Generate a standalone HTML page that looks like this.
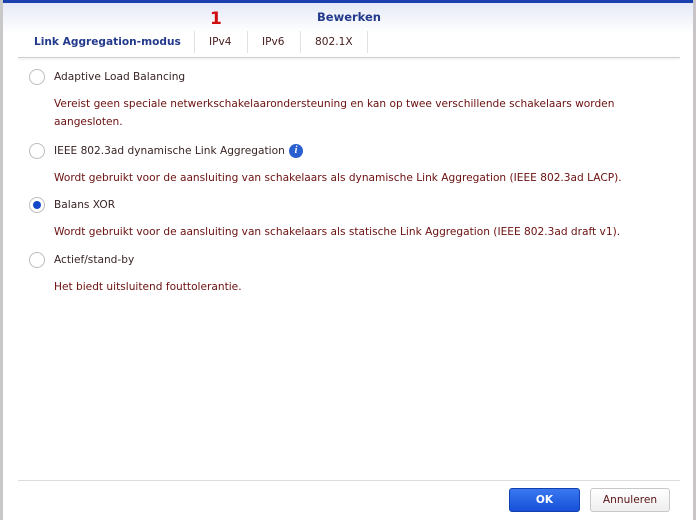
<!DOCTYPE html>
<html><head><meta charset="utf-8"><style>
body{margin:0;width:700px;height:520px;overflow:hidden;background:#fff;font-family:"DejaVu Sans",Verdana,sans-serif;font-size:10.6px;position:relative}
.abs{position:absolute;white-space:nowrap}
.top{position:absolute;left:0;top:0;width:700px;height:3px;background:#1a3fae}
.hdr{position:absolute;left:0;top:3px;width:700px;height:30px;background:linear-gradient(#e4e9f6,#fff)}
.lb{position:absolute;left:0;top:0;width:3px;height:520px;background:#c8c8c8}
.rb{position:absolute;left:693px;top:0;width:3px;height:520px;background:#c8c4c8}
.rb2{position:absolute;left:696px;top:0;width:4px;height:520px;background:#fff}
.title{left:317px;top:10px;color:#233a8c;font-weight:bold;font-size:11.5px}
.one{left:210px;top:9px;color:#d01010;font-weight:bold;font-size:17px}
.tabline{position:absolute;left:18px;top:57px;width:662px;height:1px;background:#cfcfcf;box-shadow:0 1px 2px #ddd}
.tab{top:36px;color:#4a2020}
.sep{position:absolute;top:31px;width:1px;height:22px;background:#e2e2e2}
.radio{position:absolute;left:29px;width:14px;height:14px;border:1px solid #bdbdbd;border-radius:50%;background:#fff}
.radio.on::after{content:"";position:absolute;left:3px;top:3px;width:8px;height:8px;border-radius:50%;background:#1248c8}
.lbl{left:54px;color:#3a2525}
.desc{left:54px;color:#6b1010}
.btm{position:absolute;left:18px;top:480px;width:662px;height:1px;background:#ddd}
.ok{position:absolute;left:509px;top:488px;width:71px;height:24px;background:linear-gradient(#3a78f0,#1550d8);border:1px solid #1340b0;border-radius:3px;color:#fff;font-weight:bold;text-align:center;line-height:22px;box-sizing:border-box}
.cn{position:absolute;left:590px;top:488px;width:80px;height:24px;background:linear-gradient(#fff,#eee);border:1px solid #c8c8c8;border-radius:3px;color:#5a1515;text-align:center;line-height:22px;box-sizing:border-box}
.info{position:absolute;left:289px;top:144px;width:14px;height:14px;border-radius:50%;background:#2a5fd0;color:#fff;font-size:10px;font-weight:bold;font-style:italic;text-align:center;line-height:14px;font-family:"Liberation Serif",serif}
</style></head><body>
<div class="hdr"></div><div class="top"></div><div class="lb"></div><div class="rb"></div><div class="rb2"></div>
<div class="abs title">Bewerken</div>
<div class="abs one">1</div>
<div class="abs tab" style="left:34px;color:#233a8c;font-weight:bold">Link Aggregation-modus</div>
<div class="sep" style="left:194px"></div>
<div class="abs tab" style="left:209px">IPv4</div>
<div class="sep" style="left:247px"></div>
<div class="abs tab" style="left:262px">IPv6</div>
<div class="sep" style="left:300px"></div>
<div class="abs tab" style="left:315px">802.1X</div>
<div class="sep" style="left:367px"></div>
<div class="tabline"></div>
<div class="radio" style="top:69px"></div><div class="abs lbl" style="top:71px">Adaptive Load Balancing</div>
<div class="abs desc" style="top:98px">Vereist geen speciale netwerkschakelaarondersteuning en kan op twee verschillende schakelaars worden</div>
<div class="abs desc" style="top:116px">aangesloten.</div>
<div class="radio" style="top:143px"></div><div class="abs lbl" style="top:145px">IEEE 802.3ad dynamische Link Aggregation</div><div class="info">i</div>
<div class="abs desc" style="top:172px">Wordt gebruikt voor de aansluiting van schakelaars als dynamische Link Aggregation (IEEE 802.3ad LACP).</div>
<div class="radio on" style="top:197px"></div><div class="abs lbl" style="top:199px">Balans XOR</div>
<div class="abs desc" style="top:226px">Wordt gebruikt voor de aansluiting van schakelaars als statische Link Aggregation (IEEE 802.3ad draft v1).</div>
<div class="radio" style="top:252px"></div><div class="abs lbl" style="top:254px">Actief/stand-by</div>
<div class="abs desc" style="top:281px">Het biedt uitsluitend fouttolerantie.</div>
<div class="btm"></div>
<div class="ok">OK</div>
<div class="cn">Annuleren</div>
</body></html>
